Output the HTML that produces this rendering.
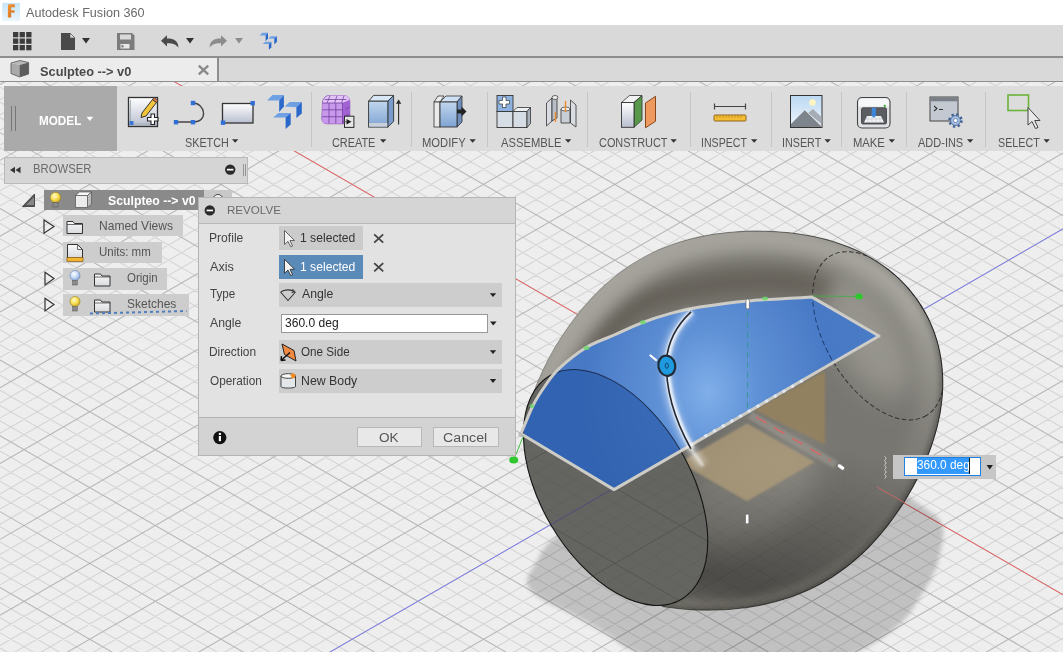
<!DOCTYPE html>
<html><head><meta charset="utf-8">
<style>
*{margin:0;padding:0;box-sizing:border-box}
html,body{width:1063px;height:652px;overflow:hidden;background:#eee;font-family:"Liberation Sans",sans-serif}
.a{position:absolute}
.t{position:absolute;white-space:nowrap;line-height:1;transform-origin:0 0}
#scene{position:absolute;left:0;top:0}
svg.a{overflow:visible}
</style></head><body>
<svg id="scene" width="1063" height="652" viewBox="0 0 1063 652">
<defs>
  <filter id="gblur" x="0" y="0" width="1063" height="652" filterUnits="userSpaceOnUse"><feGaussianBlur stdDeviation="0.6"/></filter>
  <filter id="bl6" x="-50%" y="-50%" width="200%" height="200%"><feGaussianBlur stdDeviation="6"/></filter>
  <filter id="bl8" x="-50%" y="-50%" width="200%" height="200%"><feGaussianBlur stdDeviation="8"/></filter>
  <filter id="bl10" x="-50%" y="-50%" width="200%" height="200%"><feGaussianBlur stdDeviation="10"/></filter>
  <filter id="bl15" x="-50%" y="-50%" width="200%" height="200%"><feGaussianBlur stdDeviation="15"/></filter>
  <filter id="bl2" x="-50%" y="-50%" width="200%" height="200%"><feGaussianBlur stdDeviation="2"/></filter>
  <filter id="bl3" x="-50%" y="-50%" width="200%" height="200%"><feGaussianBlur stdDeviation="3"/></filter>
  <filter id="bl1" x="-50%" y="-50%" width="200%" height="200%"><feGaussianBlur stdDeviation="1.2"/></filter>
  <radialGradient id="rimG">
    <stop offset="0" stop-color="#000" stop-opacity="0"/>
    <stop offset="0.78" stop-color="#000" stop-opacity="0"/>
    <stop offset="0.93" stop-color="#000" stop-opacity="0.14"/>
    <stop offset="1" stop-color="#000" stop-opacity="0.38"/>
  </radialGradient>
  <linearGradient id="bottomDark" gradientUnits="userSpaceOnUse" x1="820" y1="440" x2="770" y2="600">
    <stop offset="0" stop-color="#000" stop-opacity="0"/>
    <stop offset="1" stop-color="#000" stop-opacity="0.38"/>
  </linearGradient>
  <radialGradient id="blueG" gradientUnits="userSpaceOnUse" cx="708" cy="392" r="125" gradientTransform="translate(708 392) scale(1 1.25) translate(-708 -392)">
    <stop offset="0" stop-color="#80b1ee"/>
    <stop offset="0.4" stop-color="#5e92da"/>
    <stop offset="1" stop-color="#4679c8"/>
  </radialGradient>
  <clipPath id="bodyClip"><path d="M353.8 100L1063 100L1063 700L697.2 700Z"/></clipPath>
  <clipPath id="bodyE"><path d="M523.5 433.1L524.6 426.3L525.9 419.5L527.4 412.8L529.2 406.2L531.2 399.7L533.3 393.4L535.6 387.1L538.1 381.0L540.7 375.0L543.4 369.1L546.3 363.3L549.2 357.6L552.3 352.1L555.4 346.6L558.7 341.3L562.0 336.0L565.5 330.9L569.0 325.8L572.6 320.9L576.3 316.1L580.0 311.3L583.9 306.7L587.9 302.2L591.9 297.7L596.1 293.4L600.3 289.2L604.7 285.1L609.2 281.2L613.7 277.4L618.4 273.7L623.2 270.1L628.0 266.7L633.0 263.5L638.1 260.4L643.2 257.4L648.5 254.7L653.8 252.1L659.2 249.6L664.6 247.4L670.2 245.2L675.8 243.3L681.4 241.5L687.1 239.9L692.8 238.4L698.6 237.1L704.4 235.9L710.3 234.8L716.1 233.9L722.1 233.2L728.0 232.5L734.0 232.0L740.0 231.6L746.0 231.3L752.1 231.1L758.2 231.1L764.3 231.2L770.5 231.4L776.7 231.7L782.9 232.2L789.2 232.8L795.5 233.5L801.8 234.5L808.2 235.5L814.6 236.8L821.0 238.3L827.4 239.9L833.8 241.8L840.2 243.9L846.5 246.2L852.8 248.8L859.1 251.6L865.2 254.7L871.2 258.1L877.1 261.7L882.9 265.6L888.5 269.8L893.9 274.2L899.2 278.9L904.1 283.9L908.9 289.1L913.3 294.5L917.5 300.2L921.4 306.1L925.0 312.2L928.3 318.4L931.2 324.9L933.9 331.4L936.1 338.1L938.1 344.9L939.6 351.7L940.9 358.6L941.8 365.6L942.4 372.6L942.7 379.5L942.7 386.5L942.4 393.4L941.8 400.3L940.9 407.1L939.9 413.8L938.5 420.5L937.0 427.1L935.2 433.5L933.3 439.9L931.2 446.2L929.0 452.3L926.6 458.4L924.0 464.4L921.4 470.2L918.6 476.0L915.7 481.6L912.7 487.2L909.6 492.6L906.4 498.0L903.2 503.2L899.8 508.4L896.3 513.5L892.8 518.5L889.1 523.4L885.4 528.2L881.5 533.0L877.5 537.6L873.4 542.1L869.3 546.5L865.0 550.8L860.5 555.0L856.0 559.0L851.4 562.9L846.6 566.7L841.7 570.3L836.8 573.8L831.7 577.2L826.5 580.3L821.2 583.4L815.8 586.2L810.3 588.9L804.7 591.4L799.1 593.8L793.4 595.9L787.6 597.9L781.8 599.8L775.9 601.5L769.9 603.0L763.9 604.4L757.9 605.6L751.8 606.6L745.7 607.6L739.5 608.3L733.3 609.0L727.1 609.5L720.8 609.8L714.5 610.0L708.1 610.1L701.7 610.1L695.3 609.9L688.9 609.5L682.4 609.0L675.8 608.3L669.3 607.5L662.7 606.5Z"/></clipPath>
  <clipPath id="capClip"><ellipse cx="615.6" cy="487.5" rx="129.7" ry="74.75" transform="rotate(59.44 615.6 487.5)"/></clipPath>
  <clipPath id="profClip"><path d="M521.0 433.8C523.0 429.1 529.0 413.5 533.0 405.5C537.0 397.5 540.7 392.1 545.0 386.0C549.3 379.9 552.1 375.1 559.0 368.7C565.9 362.2 577.4 352.9 586.6 347.3C595.8 341.7 605.0 339.1 614.2 335.0C623.4 330.9 632.5 326.4 641.8 322.8C651.1 319.2 660.3 316.2 670.0 313.6C679.7 311.0 687.0 309.1 700.0 307.0C713.0 304.9 729.4 302.5 748.1 300.9C766.8 299.2 801.4 297.7 812.1 297.1L879 336L614 489.6Z"/></clipPath>
  <clipPath id="upperHalf"><path d="M500 200H960V300L840 290L700 300L600 330L520 430H500Z"/></clipPath>
  <clipPath id="lowerHalf"><path d="M600 480L960 420V652H600Z"/></clipPath>
  <linearGradient id="topMG" gradientUnits="userSpaceOnUse" x1="680" y1="260" x2="860" y2="520"><stop offset="0" stop-color="#fff"/><stop offset="0.55" stop-color="#fff"/><stop offset="1" stop-color="#000"/></linearGradient>
  <mask id="topMask" maskUnits="userSpaceOnUse" x="400" y="150" width="660" height="520"><rect x="400" y="150" width="660" height="520" fill="url(#topMG)"/></mask>
  <linearGradient id="botMG" gradientUnits="userSpaceOnUse" x1="800" y1="470" x2="760" y2="610"><stop offset="0" stop-color="#000"/><stop offset="1" stop-color="#fff"/></linearGradient>
  <mask id="botMask" maskUnits="userSpaceOnUse" x="400" y="150" width="660" height="520"><rect x="400" y="150" width="660" height="520" fill="url(#botMG)"/></mask>
  <linearGradient id="botMG2" gradientUnits="userSpaceOnUse" x1="800" y1="430" x2="780" y2="560"><stop offset="0" stop-color="#000"/><stop offset="1" stop-color="#fff"/></linearGradient>
  <mask id="botMask2" maskUnits="userSpaceOnUse" x="400" y="150" width="660" height="520"><rect x="400" y="150" width="660" height="520" fill="url(#botMG2)"/></mask>
  <linearGradient id="rimMG" gradientUnits="userSpaceOnUse" x1="700" y1="260" x2="820" y2="480"><stop offset="0" stop-color="#000"/><stop offset="1" stop-color="#fff"/></linearGradient>
  <mask id="rimMask" maskUnits="userSpaceOnUse" x="400" y="150" width="660" height="520"><rect x="400" y="150" width="660" height="520" fill="url(#rimMG)"/></mask>
  <linearGradient id="edgeMG" gradientUnits="userSpaceOnUse" x1="640" y1="260" x2="900" y2="330"><stop offset="0" stop-color="#333"/><stop offset="1" stop-color="#fff"/></linearGradient>
  <mask id="edgeMask" maskUnits="userSpaceOnUse" x="400" y="150" width="660" height="520"><rect x="400" y="150" width="660" height="520" fill="url(#edgeMG)"/></mask>
  <clipPath id="vp"><rect x="0" y="82" width="1063" height="570"/></clipPath>
</defs>
<g clip-path="url(#vp)">
<rect x="0" y="0" width="1063" height="652" fill="#eeeeee"/>
<g filter="url(#gblur)">
<path d="M0 -534.43L1063 79.34M0 -519.27L1063 94.50M0 -504.11L1063 109.66M0 -488.95L1063 124.82M0 -458.63L1063 155.14M0 -443.47L1063 170.30M0 -428.31L1063 185.46M0 -413.15L1063 200.62M0 -382.83L1063 230.94M0 -367.67L1063 246.10M0 -352.51L1063 261.26M0 -337.35L1063 276.42M0 -307.03L1063 306.74M0 -291.87L1063 321.90M0 -276.71L1063 337.06M0 -261.55L1063 352.22M0 -231.23L1063 382.54M0 -216.07L1063 397.70M0 -200.91L1063 412.86M0 -185.75L1063 428.02M0 -155.43L1063 458.34M0 -140.27L1063 473.50M0 -125.11L1063 488.66M0 -109.95L1063 503.82M0 -79.63L1063 534.14M0 -64.47L1063 549.30M0 -49.31L1063 564.46M0 -34.15L1063 579.62M0 -3.83L1063 609.94M0 11.33L1063 625.10M0 26.49L1063 640.26M0 41.65L1063 655.42M0 71.97L1063 685.74M0 87.13L1063 700.90M0 102.29L1063 716.06M0 117.45L1063 731.22M0 147.77L1063 761.54M0 162.93L1063 776.70M0 178.09L1063 791.86M0 193.25L1063 807.02M0 223.57L1063 837.34M0 238.73L1063 852.50M0 253.89L1063 867.66M0 269.05L1063 882.82M0 299.37L1063 913.14M0 314.53L1063 928.30M0 329.69L1063 943.46M0 344.85L1063 958.62M0 375.17L1063 988.94M0 390.33L1063 1004.10M0 405.49L1063 1019.26M0 420.65L1063 1034.42M0 450.97L1063 1064.74M0 466.13L1063 1079.90M0 481.29L1063 1095.06M0 496.45L1063 1110.22M0 526.77L1063 1140.54M0 541.93L1063 1155.70M0 557.09L1063 1170.86M0 572.25L1063 1186.02M0 602.57L1063 1216.34M0 617.73L1063 1231.50M0 632.89L1063 1246.66M0 648.05L1063 1261.82M0 69.43L1063 -544.34M0 99.75L1063 -514.02M0 114.91L1063 -498.86M0 130.07L1063 -483.70M0 145.23L1063 -468.54M0 175.55L1063 -438.22M0 190.71L1063 -423.06M0 205.87L1063 -407.90M0 221.03L1063 -392.74M0 251.35L1063 -362.42M0 266.51L1063 -347.26M0 281.67L1063 -332.10M0 296.83L1063 -316.94M0 327.15L1063 -286.62M0 342.31L1063 -271.46M0 357.47L1063 -256.30M0 372.63L1063 -241.14M0 402.95L1063 -210.82M0 418.11L1063 -195.66M0 433.27L1063 -180.50M0 448.43L1063 -165.34M0 478.75L1063 -135.02M0 493.91L1063 -119.86M0 509.07L1063 -104.70M0 524.23L1063 -89.54M0 554.55L1063 -59.22M0 569.71L1063 -44.06M0 584.87L1063 -28.90M0 600.03L1063 -13.74M0 630.35L1063 16.58M0 645.51L1063 31.74M0 660.67L1063 46.90M0 675.83L1063 62.06M0 706.15L1063 92.38M0 721.31L1063 107.54M0 736.47L1063 122.70M0 751.63L1063 137.86M0 781.95L1063 168.18M0 797.11L1063 183.34M0 812.27L1063 198.50M0 827.43L1063 213.66M0 857.75L1063 243.98M0 872.91L1063 259.14M0 888.07L1063 274.30M0 903.23L1063 289.46M0 933.55L1063 319.78M0 948.71L1063 334.94M0 963.87L1063 350.10M0 979.03L1063 365.26M0 1009.35L1063 395.58M0 1024.51L1063 410.74M0 1039.67L1063 425.90M0 1054.83L1063 441.06M0 1085.15L1063 471.38M0 1100.31L1063 486.54M0 1115.47L1063 501.70M0 1130.63L1063 516.86M0 1160.95L1063 547.18M0 1176.11L1063 562.34M0 1191.27L1063 577.50M0 1206.43L1063 592.66M0 1236.75L1063 622.98M0 1251.91L1063 638.14M0 1267.07L1063 653.30" stroke="#d5d5d5" stroke-width="1.1" fill="none"/>
<path d="M0 -473.79L1063 139.98M0 -397.99L1063 215.78M0 -322.19L1063 291.58M0 -246.39L1063 367.38M0 -170.59L1063 443.18M0 -94.79L1063 518.98M0 -18.99L1063 594.78M0 56.81L1063 670.58M0 132.61L1063 746.38M0 208.41L1063 822.18M0 284.21L1063 897.98M0 360.01L1063 973.78M0 435.81L1063 1049.58M0 511.61L1063 1125.38M0 587.41L1063 1201.18M0 663.21L1063 1276.98M0 84.59L1063 -529.18M0 160.39L1063 -453.38M0 236.19L1063 -377.58M0 311.99L1063 -301.78M0 387.79L1063 -225.98M0 463.59L1063 -150.18M0 539.39L1063 -74.38M0 615.19L1063 1.42M0 690.99L1063 77.22M0 766.79L1063 153.02M0 842.59L1063 228.82M0 918.39L1063 304.62M0 994.19L1063 380.42M0 1069.99L1063 456.22M0 1145.79L1063 532.02M0 1221.59L1063 607.82" stroke="#b8b8b8" stroke-width="1.1" fill="none"/>
</g>
<path d="M0 -18.99L1063 594.78" stroke="#ee6262" stroke-width="1" fill="none"/>
<path d="M0 842.59L1063 228.82" stroke="#7d7df0" stroke-width="1" fill="none"/>
<!-- shadow -->
<path d="M527.0 583.0C527.7 588.8 532.8 593.0 540.0 598.0C547.2 603.0 559.2 607.2 570.0 613.0C580.8 618.8 594.0 626.5 605.0 633.0C616.0 639.5 620.2 645.5 636.0 652.0C651.8 658.5 676.0 668.2 700.0 672.0C724.0 675.8 753.8 678.3 780.0 675.0C806.2 671.7 837.0 660.5 857.0 652.0C877.0 643.5 889.8 632.7 900.0 624.0C910.2 615.3 913.2 607.4 918.3 600.0C923.4 592.6 927.3 586.2 930.6 579.8C933.9 573.3 936.2 570.0 938.2 561.3C940.2 552.6 945.0 536.5 942.8 527.6C940.6 518.7 937.1 515.9 925.0 508.0C912.9 500.1 900.8 486.3 870.0 480.0C839.2 473.7 781.7 466.7 740.0 470.0C698.3 473.3 650.8 488.8 620.0 500.0C589.2 511.2 569.4 527.0 555.4 537.5C541.4 548.0 540.7 555.4 536.0 563.0C531.3 570.6 526.3 577.2 527.0 583.0Z" fill="#000" fill-opacity="0.19" filter="url(#bl2)"/>
<!-- body -->
<g clip-path="url(#bodyE)">
  <rect x="500" y="220" width="460" height="400" fill="#787670"/>
  <ellipse cx="745" cy="495" rx="80" ry="45" transform="rotate(-30 745 495)" fill="#a3a19a" fill-opacity="0.65" filter="url(#bl15)"/>
  <ellipse cx="868" cy="335" rx="70" ry="34" transform="rotate(59 868 335)" fill="#aeada6" fill-opacity="0.55" filter="url(#bl15)"/>
  <path d="M556 405C570 362 600 330 640 304C680 288 720 282 760 281C790 281 810 284 830 290" fill="none" stroke="#575145" stroke-width="20" stroke-opacity="0.62" filter="url(#bl8)"/>
  <rect x="500" y="220" width="460" height="400" fill="url(#bottomDark)"/>
  <g mask="url(#topMask)">
   <path d="M523.5 433.1L524.6 426.3L525.9 419.5L527.4 412.8L529.2 406.2L531.2 399.7L533.3 393.4L535.6 387.1L538.1 381.0L540.7 375.0L543.4 369.1L546.3 363.3L549.2 357.6L552.3 352.1L555.4 346.6L558.7 341.3L562.0 336.0L565.5 330.9L569.0 325.8L572.6 320.9L576.3 316.1L580.0 311.3L583.9 306.7L587.9 302.2L591.9 297.7L596.1 293.4L600.3 289.2L604.7 285.1L609.2 281.2L613.7 277.4L618.4 273.7L623.2 270.1L628.0 266.7L633.0 263.5L638.1 260.4L643.2 257.4L648.5 254.7L653.8 252.1L659.2 249.6L664.6 247.4L670.2 245.2L675.8 243.3L681.4 241.5L687.1 239.9L692.8 238.4L698.6 237.1L704.4 235.9L710.3 234.8L716.1 233.9L722.1 233.2L728.0 232.5L734.0 232.0L740.0 231.6L746.0 231.3L752.1 231.1L758.2 231.1L764.3 231.2L770.5 231.4L776.7 231.7L782.9 232.2L789.2 232.8L795.5 233.5L801.8 234.5L808.2 235.5L814.6 236.8L821.0 238.3L827.4 239.9L833.8 241.8L840.2 243.9L846.5 246.2L852.8 248.8L859.1 251.6L865.2 254.7L871.2 258.1L877.1 261.7L882.9 265.6L888.5 269.8L893.9 274.2L899.2 278.9L904.1 283.9L908.9 289.1L913.3 294.5L917.5 300.2L921.4 306.1L925.0 312.2L928.3 318.4L931.2 324.9L933.9 331.4L936.1 338.1L938.1 344.9L939.6 351.7L940.9 358.6L941.8 365.6L942.4 372.6L942.7 379.5L942.7 386.5L942.4 393.4L941.8 400.3L940.9 407.1L939.9 413.8L938.5 420.5L937.0 427.1L935.2 433.5L933.3 439.9L931.2 446.2L929.0 452.3L926.6 458.4L924.0 464.4L921.4 470.2L918.6 476.0L915.7 481.6L912.7 487.2L909.6 492.6L906.4 498.0L903.2 503.2L899.8 508.4L896.3 513.5L892.8 518.5L889.1 523.4L885.4 528.2L881.5 533.0L877.5 537.6L873.4 542.1L869.3 546.5L865.0 550.8L860.5 555.0L856.0 559.0L851.4 562.9L846.6 566.7L841.7 570.3L836.8 573.8L831.7 577.2L826.5 580.3L821.2 583.4L815.8 586.2L810.3 588.9L804.7 591.4L799.1 593.8L793.4 595.9L787.6 597.9L781.8 599.8L775.9 601.5L769.9 603.0L763.9 604.4L757.9 605.6L751.8 606.6L745.7 607.6L739.5 608.3L733.3 609.0L727.1 609.5L720.8 609.8L714.5 610.0L708.1 610.1L701.7 610.1L695.3 609.9L688.9 609.5L682.4 609.0L675.8 608.3L669.3 607.5L662.7 606.5Z" fill="none" stroke="#b0afa8" stroke-width="44" stroke-opacity="0.8" filter="url(#bl8)"/>
  </g>
  <g mask="url(#botMask)">
   <path d="M523.5 433.1L524.6 426.3L525.9 419.5L527.4 412.8L529.2 406.2L531.2 399.7L533.3 393.4L535.6 387.1L538.1 381.0L540.7 375.0L543.4 369.1L546.3 363.3L549.2 357.6L552.3 352.1L555.4 346.6L558.7 341.3L562.0 336.0L565.5 330.9L569.0 325.8L572.6 320.9L576.3 316.1L580.0 311.3L583.9 306.7L587.9 302.2L591.9 297.7L596.1 293.4L600.3 289.2L604.7 285.1L609.2 281.2L613.7 277.4L618.4 273.7L623.2 270.1L628.0 266.7L633.0 263.5L638.1 260.4L643.2 257.4L648.5 254.7L653.8 252.1L659.2 249.6L664.6 247.4L670.2 245.2L675.8 243.3L681.4 241.5L687.1 239.9L692.8 238.4L698.6 237.1L704.4 235.9L710.3 234.8L716.1 233.9L722.1 233.2L728.0 232.5L734.0 232.0L740.0 231.6L746.0 231.3L752.1 231.1L758.2 231.1L764.3 231.2L770.5 231.4L776.7 231.7L782.9 232.2L789.2 232.8L795.5 233.5L801.8 234.5L808.2 235.5L814.6 236.8L821.0 238.3L827.4 239.9L833.8 241.8L840.2 243.9L846.5 246.2L852.8 248.8L859.1 251.6L865.2 254.7L871.2 258.1L877.1 261.7L882.9 265.6L888.5 269.8L893.9 274.2L899.2 278.9L904.1 283.9L908.9 289.1L913.3 294.5L917.5 300.2L921.4 306.1L925.0 312.2L928.3 318.4L931.2 324.9L933.9 331.4L936.1 338.1L938.1 344.9L939.6 351.7L940.9 358.6L941.8 365.6L942.4 372.6L942.7 379.5L942.7 386.5L942.4 393.4L941.8 400.3L940.9 407.1L939.9 413.8L938.5 420.5L937.0 427.1L935.2 433.5L933.3 439.9L931.2 446.2L929.0 452.3L926.6 458.4L924.0 464.4L921.4 470.2L918.6 476.0L915.7 481.6L912.7 487.2L909.6 492.6L906.4 498.0L903.2 503.2L899.8 508.4L896.3 513.5L892.8 518.5L889.1 523.4L885.4 528.2L881.5 533.0L877.5 537.6L873.4 542.1L869.3 546.5L865.0 550.8L860.5 555.0L856.0 559.0L851.4 562.9L846.6 566.7L841.7 570.3L836.8 573.8L831.7 577.2L826.5 580.3L821.2 583.4L815.8 586.2L810.3 588.9L804.7 591.4L799.1 593.8L793.4 595.9L787.6 597.9L781.8 599.8L775.9 601.5L769.9 603.0L763.9 604.4L757.9 605.6L751.8 606.6L745.7 607.6L739.5 608.3L733.3 609.0L727.1 609.5L720.8 609.8L714.5 610.0L708.1 610.1L701.7 610.1L695.3 609.9L688.9 609.5L682.4 609.0L675.8 608.3L669.3 607.5L662.7 606.5Z" fill="none" stroke="#9a958a" stroke-width="16" stroke-opacity="0.6" filter="url(#bl6)"/>
  </g>
  <g mask="url(#rimMask)"><path d="M523.5 433.1L524.6 426.3L525.9 419.5L527.4 412.8L529.2 406.2L531.2 399.7L533.3 393.4L535.6 387.1L538.1 381.0L540.7 375.0L543.4 369.1L546.3 363.3L549.2 357.6L552.3 352.1L555.4 346.6L558.7 341.3L562.0 336.0L565.5 330.9L569.0 325.8L572.6 320.9L576.3 316.1L580.0 311.3L583.9 306.7L587.9 302.2L591.9 297.7L596.1 293.4L600.3 289.2L604.7 285.1L609.2 281.2L613.7 277.4L618.4 273.7L623.2 270.1L628.0 266.7L633.0 263.5L638.1 260.4L643.2 257.4L648.5 254.7L653.8 252.1L659.2 249.6L664.6 247.4L670.2 245.2L675.8 243.3L681.4 241.5L687.1 239.9L692.8 238.4L698.6 237.1L704.4 235.9L710.3 234.8L716.1 233.9L722.1 233.2L728.0 232.5L734.0 232.0L740.0 231.6L746.0 231.3L752.1 231.1L758.2 231.1L764.3 231.2L770.5 231.4L776.7 231.7L782.9 232.2L789.2 232.8L795.5 233.5L801.8 234.5L808.2 235.5L814.6 236.8L821.0 238.3L827.4 239.9L833.8 241.8L840.2 243.9L846.5 246.2L852.8 248.8L859.1 251.6L865.2 254.7L871.2 258.1L877.1 261.7L882.9 265.6L888.5 269.8L893.9 274.2L899.2 278.9L904.1 283.9L908.9 289.1L913.3 294.5L917.5 300.2L921.4 306.1L925.0 312.2L928.3 318.4L931.2 324.9L933.9 331.4L936.1 338.1L938.1 344.9L939.6 351.7L940.9 358.6L941.8 365.6L942.4 372.6L942.7 379.5L942.7 386.5L942.4 393.4L941.8 400.3L940.9 407.1L939.9 413.8L938.5 420.5L937.0 427.1L935.2 433.5L933.3 439.9L931.2 446.2L929.0 452.3L926.6 458.4L924.0 464.4L921.4 470.2L918.6 476.0L915.7 481.6L912.7 487.2L909.6 492.6L906.4 498.0L903.2 503.2L899.8 508.4L896.3 513.5L892.8 518.5L889.1 523.4L885.4 528.2L881.5 533.0L877.5 537.6L873.4 542.1L869.3 546.5L865.0 550.8L860.5 555.0L856.0 559.0L851.4 562.9L846.6 566.7L841.7 570.3L836.8 573.8L831.7 577.2L826.5 580.3L821.2 583.4L815.8 586.2L810.3 588.9L804.7 591.4L799.1 593.8L793.4 595.9L787.6 597.9L781.8 599.8L775.9 601.5L769.9 603.0L763.9 604.4L757.9 605.6L751.8 606.6L745.7 607.6L739.5 608.3L733.3 609.0L727.1 609.5L720.8 609.8L714.5 610.0L708.1 610.1L701.7 610.1L695.3 609.9L688.9 609.5L682.4 609.0L675.8 608.3L669.3 607.5L662.7 606.5Z" fill="none" stroke="#2a2926" stroke-width="6" stroke-opacity="0.4" filter="url(#bl2)"/></g>
  <g mask="url(#botMask2)" opacity="0.07">
   <path d="M0 -473.79L1063 139.98M0 -397.99L1063 215.78M0 -322.19L1063 291.58M0 -246.39L1063 367.38M0 -170.59L1063 443.18M0 -94.79L1063 518.98M0 -18.99L1063 594.78M0 56.81L1063 670.58M0 132.61L1063 746.38M0 208.41L1063 822.18M0 284.21L1063 897.98M0 360.01L1063 973.78M0 435.81L1063 1049.58M0 511.61L1063 1125.38M0 587.41L1063 1201.18M0 663.21L1063 1276.98M0 84.59L1063 -529.18M0 160.39L1063 -453.38M0 236.19L1063 -377.58M0 311.99L1063 -301.78M0 387.79L1063 -225.98M0 463.59L1063 -150.18M0 539.39L1063 -74.38M0 615.19L1063 1.42M0 690.99L1063 77.22M0 766.79L1063 153.02M0 842.59L1063 228.82M0 918.39L1063 304.62M0 994.19L1063 380.42M0 1069.99L1063 456.22M0 1145.79L1063 532.02M0 1221.59L1063 607.82" stroke="#000" stroke-width="1" fill="none"/>
   <path d="M0 -534.43L1063 79.34M0 -519.27L1063 94.50M0 -504.11L1063 109.66M0 -488.95L1063 124.82M0 -458.63L1063 155.14M0 -443.47L1063 170.30M0 -428.31L1063 185.46M0 -413.15L1063 200.62M0 -382.83L1063 230.94M0 -367.67L1063 246.10M0 -352.51L1063 261.26M0 -337.35L1063 276.42M0 -307.03L1063 306.74M0 -291.87L1063 321.90M0 -276.71L1063 337.06M0 -261.55L1063 352.22M0 -231.23L1063 382.54M0 -216.07L1063 397.70M0 -200.91L1063 412.86M0 -185.75L1063 428.02M0 -155.43L1063 458.34M0 -140.27L1063 473.50M0 -125.11L1063 488.66M0 -109.95L1063 503.82M0 -79.63L1063 534.14M0 -64.47L1063 549.30M0 -49.31L1063 564.46M0 -34.15L1063 579.62M0 -3.83L1063 609.94M0 11.33L1063 625.10M0 26.49L1063 640.26M0 41.65L1063 655.42M0 71.97L1063 685.74M0 87.13L1063 700.90M0 102.29L1063 716.06M0 117.45L1063 731.22M0 147.77L1063 761.54M0 162.93L1063 776.70M0 178.09L1063 791.86M0 193.25L1063 807.02M0 223.57L1063 837.34M0 238.73L1063 852.50M0 253.89L1063 867.66M0 269.05L1063 882.82M0 299.37L1063 913.14M0 314.53L1063 928.30M0 329.69L1063 943.46M0 344.85L1063 958.62M0 375.17L1063 988.94M0 390.33L1063 1004.10M0 405.49L1063 1019.26M0 420.65L1063 1034.42M0 450.97L1063 1064.74M0 466.13L1063 1079.90M0 481.29L1063 1095.06M0 496.45L1063 1110.22M0 526.77L1063 1140.54M0 541.93L1063 1155.70M0 557.09L1063 1170.86M0 572.25L1063 1186.02M0 602.57L1063 1216.34M0 617.73L1063 1231.50M0 632.89L1063 1246.66M0 648.05L1063 1261.82M0 69.43L1063 -544.34M0 99.75L1063 -514.02M0 114.91L1063 -498.86M0 130.07L1063 -483.70M0 145.23L1063 -468.54M0 175.55L1063 -438.22M0 190.71L1063 -423.06M0 205.87L1063 -407.90M0 221.03L1063 -392.74M0 251.35L1063 -362.42M0 266.51L1063 -347.26M0 281.67L1063 -332.10M0 296.83L1063 -316.94M0 327.15L1063 -286.62M0 342.31L1063 -271.46M0 357.47L1063 -256.30M0 372.63L1063 -241.14M0 402.95L1063 -210.82M0 418.11L1063 -195.66M0 433.27L1063 -180.50M0 448.43L1063 -165.34M0 478.75L1063 -135.02M0 493.91L1063 -119.86M0 509.07L1063 -104.70M0 524.23L1063 -89.54M0 554.55L1063 -59.22M0 569.71L1063 -44.06M0 584.87L1063 -28.90M0 600.03L1063 -13.74M0 630.35L1063 16.58M0 645.51L1063 31.74M0 660.67L1063 46.90M0 675.83L1063 62.06M0 706.15L1063 92.38M0 721.31L1063 107.54M0 736.47L1063 122.70M0 751.63L1063 137.86M0 781.95L1063 168.18M0 797.11L1063 183.34M0 812.27L1063 198.50M0 827.43L1063 213.66M0 857.75L1063 243.98M0 872.91L1063 259.14M0 888.07L1063 274.30M0 903.23L1063 289.46M0 933.55L1063 319.78M0 948.71L1063 334.94M0 963.87L1063 350.10M0 979.03L1063 365.26M0 1009.35L1063 395.58M0 1024.51L1063 410.74M0 1039.67L1063 425.90M0 1054.83L1063 441.06M0 1085.15L1063 471.38M0 1100.31L1063 486.54M0 1115.47L1063 501.70M0 1130.63L1063 516.86M0 1160.95L1063 547.18M0 1176.11L1063 562.34M0 1191.27L1063 577.50M0 1206.43L1063 592.66M0 1236.75L1063 622.98M0 1251.91L1063 638.14M0 1267.07L1063 653.30" stroke="#000" stroke-width="1" fill="none" opacity="0.6"/>
  </g>
</g>
<g mask="url(#edgeMask)"><path d="M523.5 433.1L524.6 426.3L525.9 419.5L527.4 412.8L529.2 406.2L531.2 399.7L533.3 393.4L535.6 387.1L538.1 381.0L540.7 375.0L543.4 369.1L546.3 363.3L549.2 357.6L552.3 352.1L555.4 346.6L558.7 341.3L562.0 336.0L565.5 330.9L569.0 325.8L572.6 320.9L576.3 316.1L580.0 311.3L583.9 306.7L587.9 302.2L591.9 297.7L596.1 293.4L600.3 289.2L604.7 285.1L609.2 281.2L613.7 277.4L618.4 273.7L623.2 270.1L628.0 266.7L633.0 263.5L638.1 260.4L643.2 257.4L648.5 254.7L653.8 252.1L659.2 249.6L664.6 247.4L670.2 245.2L675.8 243.3L681.4 241.5L687.1 239.9L692.8 238.4L698.6 237.1L704.4 235.9L710.3 234.8L716.1 233.9L722.1 233.2L728.0 232.5L734.0 232.0L740.0 231.6L746.0 231.3L752.1 231.1L758.2 231.1L764.3 231.2L770.5 231.4L776.7 231.7L782.9 232.2L789.2 232.8L795.5 233.5L801.8 234.5L808.2 235.5L814.6 236.8L821.0 238.3L827.4 239.9L833.8 241.8L840.2 243.9L846.5 246.2L852.8 248.8L859.1 251.6L865.2 254.7L871.2 258.1L877.1 261.7L882.9 265.6L888.5 269.8L893.9 274.2L899.2 278.9L904.1 283.9L908.9 289.1L913.3 294.5L917.5 300.2L921.4 306.1L925.0 312.2L928.3 318.4L931.2 324.9L933.9 331.4L936.1 338.1L938.1 344.9L939.6 351.7L940.9 358.6L941.8 365.6L942.4 372.6L942.7 379.5L942.7 386.5L942.4 393.4L941.8 400.3L940.9 407.1L939.9 413.8L938.5 420.5L937.0 427.1L935.2 433.5L933.3 439.9L931.2 446.2L929.0 452.3L926.6 458.4L924.0 464.4L921.4 470.2L918.6 476.0L915.7 481.6L912.7 487.2L909.6 492.6L906.4 498.0L903.2 503.2L899.8 508.4L896.3 513.5L892.8 518.5L889.1 523.4L885.4 528.2L881.5 533.0L877.5 537.6L873.4 542.1L869.3 546.5L865.0 550.8L860.5 555.0L856.0 559.0L851.4 562.9L846.6 566.7L841.7 570.3L836.8 573.8L831.7 577.2L826.5 580.3L821.2 583.4L815.8 586.2L810.3 588.9L804.7 591.4L799.1 593.8L793.4 595.9L787.6 597.9L781.8 599.8L775.9 601.5L769.9 603.0L763.9 604.4L757.9 605.6L751.8 606.6L745.7 607.6L739.5 608.3L733.3 609.0L727.1 609.5L720.8 609.8L714.5 610.0L708.1 610.1L701.7 610.1L695.3 609.9L688.9 609.5L682.4 609.0L675.8 608.3L669.3 607.5L662.7 606.5Z" fill="none" stroke="#2a2927" stroke-width="1.1"/></g>
<!-- interior tan shapes -->
<path d="M679.3 462.6L747 423.4L814.7 462L747 501.3Z" fill="#b09c78" fill-opacity="0.75" filter="url(#bl1)"/>
<path d="M754 410L825 371L825 444.6Z" fill="#9c8558" fill-opacity="0.7" filter="url(#bl1)"/>
<path d="M750 415L836 465" stroke="#9c9a92" stroke-width="8" stroke-opacity="0.55" filter="url(#bl1)"/>
<path d="M756 417L831 461" stroke="#dc6464" stroke-width="1.4" stroke-dasharray="12 9"/>
<!-- right dashed ellipse -->
<g clip-path="url(#bodyE)">
<ellipse cx="878.3" cy="335.8" rx="93.1" ry="52.1" transform="rotate(58.92 878.3 335.8)" fill="none" stroke="#2e2d2b" stroke-width="1" stroke-dasharray="4.5 2.5" stroke-opacity="0.95"/>
</g>
<!-- cap face -->
<ellipse cx="615.6" cy="487.5" rx="129.7" ry="74.75" transform="rotate(59.44 615.6 487.5)" fill="#646461"/>
<g clip-path="url(#capClip)" opacity="0.35">
<path d="M0 -473.79L1063 139.98M0 -397.99L1063 215.78M0 -322.19L1063 291.58M0 -246.39L1063 367.38M0 -170.59L1063 443.18M0 -94.79L1063 518.98M0 -18.99L1063 594.78M0 56.81L1063 670.58M0 132.61L1063 746.38M0 208.41L1063 822.18M0 284.21L1063 897.98M0 360.01L1063 973.78M0 435.81L1063 1049.58M0 511.61L1063 1125.38M0 587.41L1063 1201.18M0 663.21L1063 1276.98M0 84.59L1063 -529.18M0 160.39L1063 -453.38M0 236.19L1063 -377.58M0 311.99L1063 -301.78M0 387.79L1063 -225.98M0 463.59L1063 -150.18M0 539.39L1063 -74.38M0 615.19L1063 1.42M0 690.99L1063 77.22M0 766.79L1063 153.02M0 842.59L1063 228.82M0 918.39L1063 304.62M0 994.19L1063 380.42M0 1069.99L1063 456.22M0 1145.79L1063 532.02M0 1221.59L1063 607.82" stroke="#3a3a38" stroke-width="1" fill="none"/>
<path d="M0 -534.43L1063 79.34M0 -519.27L1063 94.50M0 -504.11L1063 109.66M0 -488.95L1063 124.82M0 -458.63L1063 155.14M0 -443.47L1063 170.30M0 -428.31L1063 185.46M0 -413.15L1063 200.62M0 -382.83L1063 230.94M0 -367.67L1063 246.10M0 -352.51L1063 261.26M0 -337.35L1063 276.42M0 -307.03L1063 306.74M0 -291.87L1063 321.90M0 -276.71L1063 337.06M0 -261.55L1063 352.22M0 -231.23L1063 382.54M0 -216.07L1063 397.70M0 -200.91L1063 412.86M0 -185.75L1063 428.02M0 -155.43L1063 458.34M0 -140.27L1063 473.50M0 -125.11L1063 488.66M0 -109.95L1063 503.82M0 -79.63L1063 534.14M0 -64.47L1063 549.30M0 -49.31L1063 564.46M0 -34.15L1063 579.62M0 -3.83L1063 609.94M0 11.33L1063 625.10M0 26.49L1063 640.26M0 41.65L1063 655.42M0 71.97L1063 685.74M0 87.13L1063 700.90M0 102.29L1063 716.06M0 117.45L1063 731.22M0 147.77L1063 761.54M0 162.93L1063 776.70M0 178.09L1063 791.86M0 193.25L1063 807.02M0 223.57L1063 837.34M0 238.73L1063 852.50M0 253.89L1063 867.66M0 269.05L1063 882.82M0 299.37L1063 913.14M0 314.53L1063 928.30M0 329.69L1063 943.46M0 344.85L1063 958.62M0 375.17L1063 988.94M0 390.33L1063 1004.10M0 405.49L1063 1019.26M0 420.65L1063 1034.42M0 450.97L1063 1064.74M0 466.13L1063 1079.90M0 481.29L1063 1095.06M0 496.45L1063 1110.22M0 526.77L1063 1140.54M0 541.93L1063 1155.70M0 557.09L1063 1170.86M0 572.25L1063 1186.02M0 602.57L1063 1216.34M0 617.73L1063 1231.50M0 632.89L1063 1246.66M0 648.05L1063 1261.82M0 69.43L1063 -544.34M0 99.75L1063 -514.02M0 114.91L1063 -498.86M0 130.07L1063 -483.70M0 145.23L1063 -468.54M0 175.55L1063 -438.22M0 190.71L1063 -423.06M0 205.87L1063 -407.90M0 221.03L1063 -392.74M0 251.35L1063 -362.42M0 266.51L1063 -347.26M0 281.67L1063 -332.10M0 296.83L1063 -316.94M0 327.15L1063 -286.62M0 342.31L1063 -271.46M0 357.47L1063 -256.30M0 372.63L1063 -241.14M0 402.95L1063 -210.82M0 418.11L1063 -195.66M0 433.27L1063 -180.50M0 448.43L1063 -165.34M0 478.75L1063 -135.02M0 493.91L1063 -119.86M0 509.07L1063 -104.70M0 524.23L1063 -89.54M0 554.55L1063 -59.22M0 569.71L1063 -44.06M0 584.87L1063 -28.90M0 600.03L1063 -13.74M0 630.35L1063 16.58M0 645.51L1063 31.74M0 660.67L1063 46.90M0 675.83L1063 62.06M0 706.15L1063 92.38M0 721.31L1063 107.54M0 736.47L1063 122.70M0 751.63L1063 137.86M0 781.95L1063 168.18M0 797.11L1063 183.34M0 812.27L1063 198.50M0 827.43L1063 213.66M0 857.75L1063 243.98M0 872.91L1063 259.14M0 888.07L1063 274.30M0 903.23L1063 289.46M0 933.55L1063 319.78M0 948.71L1063 334.94M0 963.87L1063 350.10M0 979.03L1063 365.26M0 1009.35L1063 395.58M0 1024.51L1063 410.74M0 1039.67L1063 425.90M0 1054.83L1063 441.06M0 1085.15L1063 471.38M0 1100.31L1063 486.54M0 1115.47L1063 501.70M0 1130.63L1063 516.86M0 1160.95L1063 547.18M0 1176.11L1063 562.34M0 1191.27L1063 577.50M0 1206.43L1063 592.66M0 1236.75L1063 622.98M0 1251.91L1063 638.14M0 1267.07L1063 653.30" stroke="#4a4a48" stroke-width="1" fill="none" opacity="0.3"/>
<path d="M0 842.59L1063 228.82" stroke="#3030c0" stroke-width="1" fill="none"/>
</g>
<ellipse cx="615.6" cy="487.5" rx="129.7" ry="74.75" transform="rotate(59.44 615.6 487.5)" fill="none" stroke="#151514" stroke-width="1.1"/>
<!-- blue profile -->
<path d="M521.0 433.8C523.0 429.1 529.0 413.5 533.0 405.5C537.0 397.5 540.7 392.1 545.0 386.0C549.3 379.9 552.1 375.1 559.0 368.7C565.9 362.2 577.4 352.9 586.6 347.3C595.8 341.7 605.0 339.1 614.2 335.0C623.4 330.9 632.5 326.4 641.8 322.8C651.1 319.2 660.3 316.2 670.0 313.6C679.7 311.0 687.0 309.1 700.0 307.0C713.0 304.9 729.4 302.5 748.1 300.9C766.8 299.2 801.4 297.7 812.1 297.1L879 336L614 489.6Z" fill="url(#blueG)" fill-opacity="0.96"/>
<g clip-path="url(#profClip)">
 <g clip-path="url(#capClip)">
  <rect x="500" y="280" width="400" height="220" fill="#2b5cab" fill-opacity="0.72"/>
 </g>
 <ellipse cx="615.6" cy="487.5" rx="129.7" ry="74.75" transform="rotate(59.44 615.6 487.5)" fill="none" stroke="#1d2f50" stroke-width="1"/>
 <ellipse cx="878.3" cy="335.8" rx="93.1" ry="52.1" transform="rotate(58.92 878.3 335.8)" fill="none" stroke="#1f3f70" stroke-width="1" stroke-dasharray="5 3"/>
</g>
<path d="M521.0 433.8C523.0 429.1 529.0 413.5 533.0 405.5C537.0 397.5 540.7 392.1 545.0 386.0C549.3 379.9 552.1 375.1 559.0 368.7C565.9 362.2 577.4 352.9 586.6 347.3C595.8 341.7 605.0 339.1 614.2 335.0C623.4 330.9 632.5 326.4 641.8 322.8C651.1 319.2 660.3 316.2 670.0 313.6C679.7 311.0 687.0 309.1 700.0 307.0C713.0 304.9 729.4 302.5 748.1 300.9C766.8 299.2 801.4 297.7 812.1 297.1L879 336L614 489.6Z" fill="none" stroke="#cdccc6" stroke-width="3" stroke-linejoin="round"/>
<!-- ticks along axis edge -->
<path d="M704.5 436.5L808 377.5" stroke="#e4ecf8" stroke-width="3" stroke-dasharray="3 7" opacity="0.9"/>
<!-- arc manipulator -->
<path d="M691 311.8C677 325 668 342 666.5 360C665.5 385 672 415 691 449C695 456 699 461 703 465" fill="none" stroke="#ffffff" stroke-width="9" stroke-opacity="0.45" filter="url(#bl3)"/>
<path d="M692 311.8C678 325 669 342 667.5 360C666.5 385 673 415 692 449" fill="none" stroke="#fff" stroke-width="5.5" stroke-opacity="0.75" filter="url(#bl1)"/>
<path d="M691 311.8C677 325 668 342 666.5 360C665.5 385 672 415 691 449" fill="none" stroke="#252a33" stroke-width="1.6"/>
<path d="M691 449L703 466" stroke="#fff" stroke-width="3" stroke-opacity="0.5" filter="url(#bl1)"/>
<ellipse cx="666.8" cy="365.7" rx="8.4" ry="10.2" transform="rotate(-12 666.8 365.7)" fill="#1e9ae0" stroke="#222c38" stroke-width="2.2"/>
<ellipse cx="666.8" cy="365.7" rx="1.6" ry="2.6" fill="none" stroke="#123a5a" stroke-width="0.9"/>
<path d="M650.5 355.5L656 360" stroke="#fff" stroke-width="2.2" stroke-linecap="round"/>
<!-- vertical green dashed -->
<path d="M747.5 312V412" stroke="#2f9a8a" stroke-width="1" stroke-dasharray="6 4" opacity="0.8"/>
<path d="M813 296L859 296.5" stroke="#40b040" stroke-width="1" opacity="0.8"/>
<!-- red axis through body right -->
<path d="M877 487L905 503" stroke="#e06a6a" stroke-width="1" opacity="0.8"/>
<!-- handles -->
<rect x="746" y="299" width="3.4" height="10" rx="1.7" fill="#fff" stroke="#666" stroke-width="0.7"/>
<rect x="745.5" y="514" width="3.4" height="10" rx="1.7" fill="#fff" stroke="#666" stroke-width="0.7"/>
<rect x="837" y="465" width="8" height="4" rx="1.8" transform="rotate(35 841 467)" fill="#fff" stroke="#666" stroke-width="0.7"/>
<!-- green dots -->
<ellipse cx="859" cy="296.5" rx="3.8" ry="3" fill="#2ec82e"/>
<ellipse cx="513.7" cy="460" rx="4.5" ry="3.5" fill="#2ec82e"/>
<ellipse cx="765" cy="298.5" rx="3" ry="2" fill="#6ad86a" opacity="0.8"/>
<ellipse cx="643" cy="322.2" rx="3" ry="2" fill="#6ad86a" opacity="0.8"/>
<ellipse cx="586.5" cy="348" rx="3" ry="2" fill="#6ad86a" opacity="0.8"/>
<ellipse cx="532" cy="406" rx="2.5" ry="2" fill="#6ad86a" opacity="0.8"/>
<path d="M513.7 460L523.5 435.6" stroke="#40c040" stroke-width="1"/>
<path d="M518.6 432L523.5 433.5L523.5 437.5L518.6 436.5Z" fill="#bdbdbd"/>
</g>
</svg>

<!-- title bar -->
<div class="a" style="left:0;top:0;width:1063px;height:25px;background:#fff"></div>
<svg class="a" style="left:2px;top:3px" width="18" height="18" viewBox="2 3 18 18"><defs><linearGradient id="fbg" x1="0" y1="0" x2="0" y2="1"><stop offset="0" stop-color="#c6e4f7"/><stop offset="1" stop-color="#eaf5fc"/></linearGradient><linearGradient id="fF" x1="0" y1="0" x2="1" y2="1"><stop offset="0" stop-color="#f29a3a"/><stop offset="1" stop-color="#d0681a"/></linearGradient></defs><rect x="2.3" y="2.9" width="17.7" height="18" fill="url(#fbg)"/><path d="M8 4.4C10 4.1 13 4 14.9 4.6L14.6 7.6C13 7.3 12 7.3 11.2 7.5V10.2L14.8 10.5L14.3 12.8L11.2 12.6V17.2C10.3 17.7 8.6 17.7 7.8 17.2Z" fill="url(#fF)"/></svg>
<!-- toolbar -->
<div class="a" style="left:0;top:25px;width:1063px;height:31px;background:#d9d9d9"></div>
<div class="a" style="left:0;top:56px;width:1063px;height:2px;background:#8e8e8e"></div>
<div class="a" style="left:0;top:58px;width:1063px;height:23px;background:#d9d9d9"></div>
<div class="a" style="left:0;top:58px;width:217px;height:23px;background:#ececec"></div>
<div class="a" style="left:217px;top:58px;width:2px;height:23px;background:#8e8e8e"></div>
<div class="a" style="left:0;top:81px;width:1063px;height:1px;background:#8e8e8e"></div>
<svg class="a" style="left:0;top:25px" width="300" height="31" viewBox="0 25 300 31">
 <g fill="#3c3c3c">
  <rect x="13" y="32" width="5.3" height="5.3"/><rect x="19.6" y="32" width="5.3" height="5.3"/><rect x="26.2" y="32" width="5.3" height="5.3"/>
  <rect x="13" y="38.5" width="5.3" height="5.3"/><rect x="19.6" y="38.5" width="5.3" height="5.3"/><rect x="26.2" y="38.5" width="5.3" height="5.3"/>
  <rect x="13" y="45" width="5.3" height="5.3"/><rect x="19.6" y="45" width="5.3" height="5.3"/><rect x="26.2" y="45" width="5.3" height="5.3"/>
 </g>
 <path d="M61 33H70L75 38V50H61Z" fill="#4a4a4a"/><path d="M70 33L75 38H70Z" fill="#d9d9d9" stroke="#4a4a4a" stroke-width="0.6"/>
 <path d="M82 38H90L86 43.5Z" fill="#333"/>
 <path d="M117 33H132L134.5 35.5V50H117Z" fill="#7c7c7c"/><rect x="120" y="34.5" width="11" height="5" fill="#d9d9d9"/><rect x="120.5" y="44" width="9" height="4.5" fill="#e8e8e8"/><rect x="121.5" y="45" width="2" height="2.5" fill="#7c7c7c"/>
 <path d="M161 40.8L167 35.2V38.6C173 38.4 178.4 40.5 178.4 47.8C176 44.3 172.5 43.2 167 43.3V46.6Z" fill="#4a4a4a"/>
 <path d="M186 38H194L190 43.5Z" fill="#333"/>
 <path d="M227 40.8L221 35.2V38.6C215 38.4 209.6 40.5 209.6 47.8C212 44.3 215.5 43.2 221 43.3V46.6Z" fill="#8c8c8c"/>
 <path d="M235 38H243L239 43.5Z" fill="#8c8c8c"/>
 <g transform="translate(126.05 -14.75) scale(0.5)"><path d="M267.1 100.5L272.5 95.1H283.9L279.2 100.5Z" fill="#6fa0e4"/><path d="M279.2 100.5L283.9 95.1V106.5L279.2 111.9Z" fill="#2a68cc"/><path d="M284.6 106.5L289.6 102.1H301.8L296.4 107.2Z" fill="#6fa0e4"/><path d="M296.4 107.2L301.8 102.1V113.6L296.4 118Z" fill="#2a68cc"/><path d="M273.1 117.6L278.5 112.9H290.7L285.6 117.6Z" fill="#6fa0e4"/><path d="M285.6 117.6L290.7 112.9V124.4L285.6 129.1Z" fill="#2a68cc"/></g>
</svg>
<!-- tab -->
<svg class="a" style="left:10px;top:59px" width="20" height="20" viewBox="10 59 20 20">
 <path d="M11 63L20 60.5L28.6 62.5L19.5 65Z" fill="#b8b8b8"/>
 <path d="M11 63L19.5 65V77L11 73.5Z" fill="#a9a9a9"/>
 <path d="M19.5 65L28.6 62.5V74L19.5 77Z" fill="#5e5e5e"/>
 <path d="M11 63L20 60.5L28.6 62.5V74L19.5 77L11 73.5Z" fill="none" stroke="#555" stroke-width="0.8"/>
</svg>
<svg class="a" style="left:196px;top:63px" width="15" height="14" viewBox="196 63 15 14"><path d="M198.8 65.6L208.2 74.4M208.2 65.6L198.8 74.4" stroke="#8a8a8a" stroke-width="2.4"/></svg>
<!-- ribbon -->
<div class="a" style="left:4px;top:86px;width:1059px;height:65px;background:#dcdcdc"></div>
<div class="a" style="left:4px;top:86px;width:113px;height:65px;background:#aaaaaa"></div>
<div class="a" style="left:11px;top:106px;width:1px;height:25px;background:#777"></div>
<div class="a" style="left:15px;top:106px;width:1px;height:25px;background:#777"></div>
<svg class="a" style="left:0;top:84px" width="1063" height="70" viewBox="0 84 1063 70">
<defs>
 <linearGradient id="rgW" x1="0" y1="0" x2="0" y2="1"><stop offset="0" stop-color="#ffffff"/><stop offset="1" stop-color="#b9bfd0"/></linearGradient>
 <linearGradient id="rgB" x1="0" y1="0" x2="0" y2="1"><stop offset="0" stop-color="#c0d6ee"/><stop offset="1" stop-color="#7ea3d2"/></linearGradient>
 <linearGradient id="rgP" x1="0" y1="0" x2="1" y2="1"><stop offset="0" stop-color="#e3b7f3"/><stop offset="1" stop-color="#9a4fc2"/></linearGradient>
 <linearGradient id="rgS" x1="0" y1="0" x2="0" y2="1"><stop offset="0" stop-color="#bcd8f2"/><stop offset="1" stop-color="#eef6fc"/></linearGradient>
</defs>
<path d="M86.5 116.8H93.2L89.85 121Z" fill="#fff"/>
<!-- separators -->
<g fill="#c6c6c6">
 <rect x="311" y="92" width="1" height="55"/><rect x="411" y="92" width="1" height="55"/><rect x="487" y="92" width="1" height="55"/>
 <rect x="587" y="92" width="1" height="55"/><rect x="690" y="92" width="1" height="55"/><rect x="771" y="92" width="1" height="55"/>
 <rect x="841" y="92" width="1" height="55"/><rect x="906" y="92" width="1" height="55"/><rect x="985" y="92" width="1" height="55"/>
</g>
<!-- dropdown arrows -->
<g fill="#333">
 <path d="M232 139.2h6.3l-3.15 3.6z"/><path d="M380 139.2h6.3l-3.15 3.6z"/><path d="M469.5 139.2h6.3l-3.15 3.6z"/>
 <path d="M565 139.2h6.3l-3.15 3.6z"/><path d="M670.5 139.2h6.3l-3.15 3.6z"/><path d="M751 139.2h6.3l-3.15 3.6z"/>
 <path d="M824.5 139.2h6.3l-3.15 3.6z"/><path d="M888.7 139.2h6.3l-3.15 3.6z"/><path d="M967 139.2h6.3l-3.15 3.6z"/>
 <path d="M1043.5 139.2h6.3l-3.15 3.6z"/>
</g>
<!-- sketch create -->
<rect x="128.5" y="97.5" width="29" height="29" fill="url(#rgW)" stroke="#333" stroke-width="1.3"/>
<path d="M130.5 100v24h25" fill="none" stroke="#9aa" stroke-width="0.8"/>
<rect x="129.5" y="121" width="4" height="4" fill="#3a78d8"/>
<path d="M142 113L152.5 99.5L156.5 102.5L146 116L141 117.5Z" fill="#f2c53a" stroke="#333" stroke-width="1"/>
<path d="M152.5 99.5L154 97.5L158 100.5L156.5 102.5Z" fill="#e07a50" stroke="#333" stroke-width="0.8"/>
<path d="M147.5 117.5h3.5v-3.5h3.5v3.5h3.5v3.5h-3.5v3.5h-3.5v-3.5h-3.5z" fill="#fff" stroke="#222" stroke-width="1.1"/>
<!-- line+arc -->
<path d="M176 122H193M193 103C205 103 209 122 193 122" fill="none" stroke="#444" stroke-width="1.3"/>
<g fill="#2f6fd6"><rect x="173.8" y="120" width="4.4" height="4.4"/><rect x="190.8" y="120" width="4.4" height="4.4"/><rect x="190.8" y="100.8" width="4.4" height="4.4"/></g>
<!-- rectangle -->
<rect x="222.5" y="103.5" width="30.5" height="19.5" fill="url(#rgW)" stroke="#333" stroke-width="1.3"/>
<g fill="#2f6fd6"><rect x="220.8" y="120.5" width="4.4" height="4.4"/><rect x="250.5" y="101" width="4.4" height="4.4"/></g>
<!-- blue Z icon -->
<g id="zic"><path d="M267.1 100.5L272.5 95.1H283.9L279.2 100.5Z" fill="#6fa0e4"/><path d="M279.2 100.5L283.9 95.1V106.5L279.2 111.9Z" fill="#2a68cc"/><path d="M284.6 106.5L289.6 102.1H301.8L296.4 107.2Z" fill="#6fa0e4"/><path d="M296.4 107.2L301.8 102.1V113.6L296.4 118Z" fill="#2a68cc"/><path d="M273.1 117.6L278.5 112.9H290.7L285.6 117.6Z" fill="#6fa0e4"/><path d="M285.6 117.6L290.7 112.9V124.4L285.6 129.1Z" fill="#2a68cc"/></g>
<!-- purple form -->
<path d="M322.5 103.5C322 100 325 95.5 329 95.5H343.5C347 95.5 349.8 98 349.8 101.5V118C349.8 121 347.5 123.8 344 123.8H327C324 123.8 321.8 121.5 321.8 118.5Z" fill="#b57ee0" stroke="#8a52b8" stroke-width="0.8"/>
<path d="M322.5 103C323.5 98.5 326.5 95.6 330 95.6H344C347 95.6 349 97.5 349.6 100L342.5 103Z" fill="#e2c4f6"/>
<path d="M342.5 103L349.6 100V118C349.6 121 347.5 123.6 344.5 123.6H342.5Z" fill="#a262d4"/>
<rect x="322.3" y="103" width="20.2" height="20.6" rx="2" fill="#c898ea"/>
<path d="M329 103V123.5M335.8 103V123.5M322.3 109.8H342.5M322.3 116.7H342.5M342.5 103V123.5M322.3 103H342.5M330 95.8L327 103M337 95.8L334.5 103M344 95.8L341.5 103M324.5 99.5H346.5M345.5 109L349.5 107M345.5 116L349.5 114" stroke="#6e3c9c" stroke-width="0.75" fill="none"/>
<rect x="344.5" y="116.2" width="9.4" height="11.2" fill="#e6e6e6" stroke="#2a2a2a" stroke-width="1"/>
<path d="M346.5 119L351.5 121.8L346.5 124.6Z" fill="#1e1e1e"/><path d="M343 121.8H347" stroke="#555" stroke-width="1"/>
<!-- extrude -->
<path d="M368.6 101.2L373.5 95.4H393.6L387.8 101.2Z" fill="#d8e6f6" stroke="#333" stroke-width="0.9"/>
<path d="M387.8 101.2L393.6 95.4V121.5L387.8 127.1Z" fill="#7a9ccc" stroke="#333" stroke-width="0.9"/>
<rect x="368.6" y="101.2" width="19.2" height="25.9" fill="url(#rgB)" stroke="#333" stroke-width="0.9"/>
<rect x="369.1" y="123" width="18.2" height="3.7" fill="#c9d0da"/>
<path d="M398.6 124.4V100.5" stroke="#2a2a2a" stroke-width="1.1"/><path d="M395.9 103.8L398.6 99.5L401.3 103.8Z" fill="#2a2a2a"/>
<!-- modify press pull -->
<path d="M434 102L438 96H444L440 102Z" fill="#eee" stroke="#333" stroke-width="0.8"/>
<rect x="434" y="102" width="6" height="25" fill="#e9e9e9" stroke="#333" stroke-width="0.8"/>
<path d="M440 102L446 96H462L457 102Z" fill="#cfe0f3" stroke="#333" stroke-width="0.8"/>
<path d="M457 102L462 96V122L457 127Z" fill="#6e8fbd" stroke="#333" stroke-width="0.8"/>
<rect x="440" y="102" width="17" height="25" fill="url(#rgB)" stroke="#333" stroke-width="0.9"/>
<path d="M457 109.5H461.5V106.5L466.5 111.5L461.5 116.5V113.5H457Z" fill="#222"/>
<!-- assemble -->
<rect x="497" y="95.5" width="16" height="16" fill="#8fb3e0" stroke="#333" stroke-width="0.9"/>
<path d="M499 100.5h3.5v-3.5h3.5v3.5h3.5v3.5h-3.5v3.5h-3.5v-3.5h-3.5z" fill="#fff" stroke="#333" stroke-width="0.7"/>
<rect x="497" y="111.5" width="16" height="16" fill="#d7dde5" stroke="#333" stroke-width="0.9"/>
<rect x="513" y="111.5" width="14" height="16" fill="#d7dde5" stroke="#333" stroke-width="0.9"/>
<path d="M513 111.5L517 107.5H530.5L527 111.5Z" fill="#eef1f4" stroke="#333" stroke-width="0.8"/>
<path d="M527 111.5L530.5 107.5V123.5L527 127.5Z" fill="#aab3bf" stroke="#333" stroke-width="0.8"/>
<!-- joint -->
<path d="M546.5 103L552 98V121L546.5 126Z" fill="#d9dde2" stroke="#333" stroke-width="0.8"/>
<path d="M552 98L557 96V118L552 121Z" fill="#b8bec6" stroke="#333" stroke-width="0.8"/>
<ellipse cx="555" cy="97.5" rx="3" ry="2" fill="#eee" stroke="#333" stroke-width="0.7"/>
<path d="M555.5 112V122" stroke="#f08a2a" stroke-width="1.4"/>
<path d="M576 105L570.5 100V123L576 127Z" fill="#d9dde2" stroke="#333" stroke-width="0.8"/>
<path d="M561 109h9v14h-9z" fill="#c8ced6" stroke="#333" stroke-width="0.8"/>
<ellipse cx="565.5" cy="109" rx="4.5" ry="2" fill="#eee" stroke="#333" stroke-width="0.7"/>
<path d="M565.5 101V112" stroke="#f08a2a" stroke-width="1.4"/>
<!-- construct -->
<path d="M621.5 102.5L629.5 95.5H642L634 102.5Z" fill="#f2f2f2" stroke="#333" stroke-width="0.8"/>
<path d="M634 102.5L642 95.5V120L634 127.3Z" fill="#58984a" stroke="#333" stroke-width="0.8"/>
<rect x="621.5" y="102.5" width="12.5" height="24.8" fill="url(#rgW)" stroke="#333" stroke-width="0.9"/>
<path d="M645.5 103L655.5 96.3V121.3L645.5 127.8Z" fill="#ee9a5e" stroke="#7a3a10" stroke-width="0.9"/>
<!-- inspect -->
<path d="M714 106.5H746M714.5 103.5V109.5M745.5 103.5V109.5" stroke="#444" stroke-width="1.2"/>
<rect x="714" y="115" width="32" height="6" rx="1" fill="#f2be36" stroke="#8a5a10" stroke-width="0.9"/>
<path d="M717 115.5V118M720 115.5V118M723 115.5V118M726 115.5V118M729 115.5V118M732 115.5V118M735 115.5V118M738 115.5V118M741 115.5V118" stroke="#b07a20" stroke-width="0.6"/>
<!-- insert -->
<rect x="790.5" y="95.5" width="31.5" height="32" fill="url(#rgS)" stroke="#333" stroke-width="1"/>
<circle cx="812.5" cy="102.5" r="3.2" fill="#fff6c0"/>
<path d="M791 124L805 110L821.5 126V127H791Z" fill="#7e848c"/>
<path d="M808 113L813 109L821.5 117V124Z" fill="#a6acb3"/>
<path d="M805 110L821.5 126" stroke="#eee" stroke-width="0.8"/>
<!-- make -->
<rect x="857.5" y="97.5" width="32.5" height="30.5" rx="4.5" fill="#dfe1e4" stroke="#444" stroke-width="1.1"/>
<path d="M858.5 104C858.5 100 860 98.5 863 98.5H884.5C887.5 98.5 889 100 889 104V106.5H858.5Z" fill="#f6f7f8"/>
<rect x="861.5" y="107.8" width="25" height="16.2" rx="1.5" fill="#5a5d62" stroke="#3a3a3a" stroke-width="0.8"/>
<path d="M864 122.5L867 116H881L884 122.5Z" fill="#eef0f2"/>
<path d="M866 119H882M868 117.5V122M872 117V122.5M876 117V122.5M880 117.5V122" stroke="#c0c4c8" stroke-width="0.5"/>
<rect x="871.7" y="107.8" width="4.2" height="7" fill="#3d86dc"/><path d="M870.5 114.5H877L873.8 118Z" fill="#3d86dc"/>
<circle cx="884.8" cy="105.8" r="1.1" fill="#22aa22"/>
<!-- add-ins -->
<rect x="930" y="97" width="28" height="24" fill="#c4c9d1" stroke="#444" stroke-width="1"/>
<rect x="930.5" y="97.5" width="27" height="3.8" fill="#7a7f87"/>
<path d="M934 106L937 108.5L934 111M939 109.5H943" fill="none" stroke="#333" stroke-width="1.1"/>
<circle cx="955.5" cy="120.5" r="6" fill="none" stroke="#41659c" stroke-width="2.6" stroke-dasharray="2.3 2.41"/>
<circle cx="955.5" cy="120.5" r="4.9" fill="#a5bde0" stroke="#3a5a8a" stroke-width="0.8"/>
<circle cx="955.5" cy="120.5" r="2" fill="#fff" stroke="#3a5a8a" stroke-width="0.6"/>
<!-- select -->
<rect x="1008" y="95" width="20.5" height="15.5" fill="none" stroke="#6cb33a" stroke-width="1.6"/>
<path d="M1028 107.5V125L1032 121.5L1035.5 128.5L1038 127.5L1034.7 120.5H1040Z" fill="#e9e9e9" stroke="#444" stroke-width="1"/>
</svg>

<!-- browser -->
<div class="a" style="left:4px;top:157px;width:244px;height:27px;background:#d5d5d5;border:1px solid #b9b9b9"></div>
<svg class="a" style="left:0;top:157px" width="260" height="27" viewBox="0 157 260 27">
 <path d="M10 170L15 166.8V173.2Z M15.5 170L20.5 166.8V173.2Z" fill="#333"/>
 <circle cx="230.2" cy="169.6" r="5.2" fill="#2b2b2b"/><rect x="227" y="168.8" width="6.4" height="1.7" fill="#fff"/>
 <rect x="243" y="164" width="0.8" height="12" fill="#888"/><rect x="245" y="164" width="0.8" height="12" fill="#888"/>
</svg>
<!-- angle box -->
<div class="a" style="left:893.3px;top:455px;width:102.8px;height:23.6px;background:#c6c6c6"></div>
<div class="a" style="left:904px;top:456.8px;width:77px;height:19.2px;background:#fff;border:1px solid #1e80e0"></div>
<div class="a" style="left:916.6px;top:458.4px;width:52.6px;height:16px;background:#3399ff"></div>
<div class="a" style="left:969px;top:458.4px;width:1px;height:16px;background:#111"></div>
<svg class="a" style="left:880px;top:454px" width="120" height="26" viewBox="880 454 120 26">
 <path d="M986.5 465.1h6.5l-3.25 4.3z" fill="#222"/>
 <path d="M884.5 456.5C886.5 457.5 886.5 459.5 884.5 460.5M884.5 461C886.5 462 886.5 464 884.5 465M884.5 465.5C886.5 466.5 886.5 468.5 884.5 469.5M884.5 470C886.5 471 886.5 473 884.5 474M884.5 474.5C886.5 475.5 886.5 477.5 884.5 478.5" fill="none" stroke="#dcdcdc" stroke-width="0.9"/>
</svg>
<div class="a" style="left:44px;top:190px;width:160px;height:20px;background:#8a8a8a"></div>
<div class="a" style="left:204px;top:190px;width:28px;height:20px;background:#c8c8c8"></div>
<div class="a" style="left:63px;top:215px;width:120px;height:21px;background:#cdcdcd"></div>
<div class="a" style="left:63px;top:242px;width:99px;height:21px;background:#cdcdcd"></div>
<div class="a" style="left:63px;top:268px;width:104px;height:21.5px;background:#cdcdcd"></div>
<div class="a" style="left:63px;top:294px;width:126px;height:21.5px;background:#cdcdcd"></div>
<svg class="a" style="left:0;top:185px" width="240" height="135" viewBox="0 185 240 135">
 <defs>
  <radialGradient id="bulbY" cx="0.4" cy="0.35" r="0.7"><stop offset="0" stop-color="#fffbd0"/><stop offset="0.5" stop-color="#f8e05a"/><stop offset="1" stop-color="#c9a418"/></radialGradient>
  <radialGradient id="bulbB" cx="0.4" cy="0.35" r="0.7"><stop offset="0" stop-color="#ffffff"/><stop offset="0.5" stop-color="#c9dcf7"/><stop offset="1" stop-color="#7f9fd0"/></radialGradient>
  <linearGradient id="fold" x1="0" y1="0" x2="0" y2="1"><stop offset="0" stop-color="#fafafa"/><stop offset="1" stop-color="#d7dade"/></linearGradient>
 </defs>
 <path d="M22.5 206.5L34.5 194V206.5Z" fill="#555" stroke="#333" stroke-width="0.8"/>
 <path d="M26 205L34 197V205Z" fill="#888"/>
 <!-- row1 bulb -->
 <circle cx="55.5" cy="197.5" r="5.2" fill="url(#bulbY)" stroke="#9b7d10" stroke-width="0.5"/>
 <rect x="53" y="202.5" width="5" height="4.5" fill="#8a8a8a" stroke="#555" stroke-width="0.5"/>
 <!-- row1 cube -->
 <path d="M75.5 195.5L79.5 192H91.5L87.5 195.5Z" fill="#fafafa" stroke="#555" stroke-width="0.7"/>
 <path d="M87.5 195.5L91.5 192V204L87.5 207.5Z" fill="#bdbdbd" stroke="#555" stroke-width="0.7"/>
 <rect x="75.5" y="195.5" width="12" height="12" fill="#ececec" stroke="#555" stroke-width="0.7"/>
 <circle cx="218" cy="199.5" r="5" fill="#f4f4f4" stroke="#444" stroke-width="1"/>
 <!-- row2 -->
 <path d="M44 220L54 226.6L44 233.2Z" fill="none" stroke="#333" stroke-width="1.2"/>
 <path d="M67 221.5H73L74.5 223.5H82.5V233.5H67Z" fill="url(#fold)" stroke="#333" stroke-width="1"/>
 <path d="M67 224.5H82.5" stroke="#333" stroke-width="0.7"/>
 <!-- row3 doc -->
 <path d="M67.5 244.5H77.5L82.5 249.5V258H67.5Z" fill="url(#fold)" stroke="#333" stroke-width="1"/>
 <path d="M77.5 244.5V249.5H82.5" fill="none" stroke="#333" stroke-width="0.7"/>
 <rect x="67" y="257.5" width="16" height="3.8" fill="#f2b630" stroke="#8a5a10" stroke-width="0.7"/>
 <!-- row4 -->
 <path d="M45 272.3L54 278.6L45 284.9Z" fill="none" stroke="#333" stroke-width="1.2"/>
 <circle cx="75" cy="275.5" r="5" fill="url(#bulbB)" stroke="#6680b0" stroke-width="0.6"/>
 <rect x="72.7" y="280.5" width="4.6" height="4.5" fill="#8a8a8a" stroke="#555" stroke-width="0.5"/>
 <path d="M94.5 274H100.5L102 276H110V286H94.5Z" fill="url(#fold)" stroke="#333" stroke-width="1"/>
 <path d="M94.5 277H110" stroke="#333" stroke-width="0.7"/>
 <!-- row5 -->
 <path d="M45 298.3L54 304.6L45 310.9Z" fill="none" stroke="#333" stroke-width="1.2"/>
 <circle cx="75" cy="301.5" r="5" fill="url(#bulbY)" stroke="#9b7d10" stroke-width="0.6"/>
 <rect x="72.7" y="306.5" width="4.6" height="4.5" fill="#8a8a8a" stroke="#555" stroke-width="0.5"/>
 <path d="M94.5 300H100.5L102 302H110V312H94.5Z" fill="url(#fold)" stroke="#333" stroke-width="1"/>
 <path d="M94.5 303H110" stroke="#333" stroke-width="0.7"/>
 <path d="M90 313.5L186.5 311" stroke="#4f7fbf" stroke-width="2" stroke-dasharray="3 3"/>
</svg>

<div class="a" style="left:198px;top:197px;width:318px;height:259px;background:#e2e2e2;border:1px solid #b5b5b5"></div>
<div class="a" style="left:199px;top:198px;width:316px;height:25.5px;background:#d5d5d5;border-bottom:1px solid #b8b8b8"></div>
<div class="a" style="left:199px;top:417px;width:316px;height:38px;background:#d3d3d3;border-top:1px solid #b3b3b3"></div>
<div class="a" style="left:278.5px;top:226px;width:84px;height:24.3px;background:#cbcbcb"></div>
<div class="a" style="left:278.5px;top:254.8px;width:84px;height:24.5px;background:#5a8ab8"></div>
<div class="a" style="left:278.5px;top:282.8px;width:223px;height:24.5px;background:#cdcdcd"></div>
<div class="a" style="left:281.2px;top:314px;width:206.8px;height:18.5px;background:#fff;border:1px solid #979797"></div>
<div class="a" style="left:278.5px;top:339.9px;width:223px;height:24.3px;background:#cdcdcd"></div>
<div class="a" style="left:278.5px;top:368.7px;width:223px;height:24.3px;background:#cdcdcd"></div>
<div class="a" style="left:356.7px;top:427.2px;width:65.2px;height:19.5px;background:#e8e8e8;border:1px solid #b8b8b8"></div>
<div class="a" style="left:433px;top:427.2px;width:65.5px;height:19.5px;background:#e8e8e8;border:1px solid #b8b8b8"></div>
<svg class="a" style="left:195px;top:195px" width="320" height="262" viewBox="195 195 320 262">
 <circle cx="209.8" cy="210.4" r="5.2" fill="#2a2a2a"/><rect x="206.6" y="209.6" width="6.4" height="1.7" fill="#fff"/>
 <!-- cursors -->
 <path d="M284.5 230.5V244.5L288 241.3L290.8 246.8L292.6 246L290 240.5H294.5Z" fill="#f4f4f4" stroke="#555" stroke-width="0.9"/>
 <path d="M284.5 259.3V273.3L288 270.1L290.8 275.6L292.6 274.8L290 269.3H294.5Z" fill="#f4f4f4" stroke="#333" stroke-width="0.9"/>
 <path d="M374.2 234.4L383.2 242.6M383.2 234.4L374.2 242.6M374.2 263.2L383.2 271.4M383.2 263.2L374.2 271.4" stroke="#444" stroke-width="1.8"/>
 <!-- type icon -->
 <path d="M280.5 292L288 300.5L295.5 292" fill="none" stroke="#333" stroke-width="1.1"/>
 <path d="M281 292C284 289.5 291 289 294 291.5" fill="none" stroke="#333" stroke-width="1.1"/>
 <path d="M292.5 289L295 291.8L291.6 292.6" fill="none" stroke="#333" stroke-width="1"/>
 <!-- dropdown arrows -->
 <g fill="#222">
  <path d="M489.8 293.3h6.4l-3.2 3.8z"/><path d="M490 321.5h6.6l-3.3 3.9z"/>
  <path d="M489.8 350.3h6.4l-3.2 3.8z"/><path d="M489.8 379.1h6.4l-3.2 3.8z"/>
 </g>
 <!-- direction icon -->
 <path d="M282 344L294 350.5L296 361L284.5 354.5Z" fill="#f08a40" stroke="#222" stroke-width="1"/>
 <path d="M281 360.5L290 352.5M281 360.5L281.5 356M281 360.5L285.5 360" fill="none" stroke="#111" stroke-width="1.5"/>
 <!-- operation icon -->
 <path d="M281 376V386.5C281 388.6 295.5 388.6 295.5 386.5V376" fill="#e4e7ea" stroke="#333" stroke-width="0.9"/>
 <ellipse cx="288.25" cy="376" rx="7.25" ry="2.3" fill="#fafafa" stroke="#333" stroke-width="0.9"/>
 <path d="M293 372.5L294 374.5L296.3 374.8L294.6 376.3L295 378.5L293 377.4L291 378.5L291.4 376.3L289.7 374.8L292 374.5Z" fill="#ff8a10"/>
 <!-- info -->
 <circle cx="219.8" cy="437.6" r="6.6" fill="#111"/><rect x="218.8" y="436" width="2.2" height="5.2" fill="#fff"/><circle cx="219.9" cy="433.9" r="1.2" fill="#fff"/>
</svg>

<div class="t" style="left:25.60px;top:5.50px;font-size:13.33px;color:#6a6a6a;transform:scaleX(0.947);">Autodesk Fusion 360</div>
<div class="t" style="left:40.22px;top:64.96px;font-size:13.62px;font-weight:bold;color:#4a4a4a;transform:scaleX(0.940);">Sculpteo --&gt; v0</div>
<div class="t" style="left:39.08px;top:113.82px;font-size:13.19px;font-weight:bold;color:#ffffff;transform:scaleX(0.888);">MODEL</div>
<div class="t" style="left:184.76px;top:136.71px;font-size:12.62px;color:#555;transform:scaleX(0.857);">SKETCH</div>
<div class="t" style="left:332.45px;top:136.71px;font-size:12.62px;color:#555;transform:scaleX(0.864);">CREATE</div>
<div class="t" style="left:422.30px;top:136.71px;font-size:12.62px;color:#555;transform:scaleX(0.891);">MODIFY</div>
<div class="t" style="left:500.70px;top:136.71px;font-size:12.62px;color:#555;transform:scaleX(0.890);">ASSEMBLE</div>
<div class="t" style="left:599.05px;top:136.71px;font-size:12.62px;color:#555;transform:scaleX(0.865);">CONSTRUCT</div>
<div class="t" style="left:701.25px;top:136.71px;font-size:12.62px;color:#555;transform:scaleX(0.839);">INSPECT</div>
<div class="t" style="left:782.13px;top:136.71px;font-size:12.62px;color:#555;transform:scaleX(0.853);">INSERT</div>
<div class="t" style="left:852.70px;top:136.71px;font-size:12.62px;color:#555;transform:scaleX(0.892);">MAKE</div>
<div class="t" style="left:918.00px;top:136.71px;font-size:12.62px;color:#555;transform:scaleX(0.872);">ADD-INS</div>
<div class="t" style="left:997.86px;top:136.71px;font-size:12.62px;color:#555;transform:scaleX(0.850);">SELECT</div>
<div class="t" style="left:33.29px;top:163.15px;font-size:12.34px;color:#6a6a6a;transform:scaleX(0.917);">BROWSER</div>
<div class="t" style="left:108.03px;top:193.82px;font-size:13.19px;font-weight:bold;color:#ffffff;transform:scaleX(0.930);">Sculpteo --&gt; v0</div>
<div class="t" style="left:98.84px;top:219.97px;font-size:12.20px;color:#555;transform:scaleX(0.987);">Named Views</div>
<div class="t" style="left:99.38px;top:246.47px;font-size:12.20px;color:#555;transform:scaleX(0.943);">Units: mm</div>
<div class="t" style="left:126.82px;top:272.47px;font-size:12.20px;color:#555;transform:scaleX(0.946);">Origin</div>
<div class="t" style="left:126.80px;top:298.47px;font-size:12.20px;color:#555;transform:scaleX(0.983);">Sketches</div>
<div class="t" style="left:226.57px;top:204.03px;font-size:11.77px;color:#6a6a6a;transform:scaleX(0.985);">REVOLVE</div>
<div class="t" style="left:209.33px;top:231.79px;font-size:12.77px;color:#444;transform:scaleX(0.949);">Profile</div>
<div class="t" style="left:210.30px;top:260.59px;font-size:12.77px;color:#444;transform:scaleX(0.988);">Axis</div>
<div class="t" style="left:210.07px;top:288.49px;font-size:12.77px;color:#444;transform:scaleX(0.915);">Type</div>
<div class="t" style="left:210.30px;top:316.79px;font-size:12.77px;color:#444;transform:scaleX(0.959);">Angle</div>
<div class="t" style="left:209.35px;top:345.59px;font-size:12.77px;color:#444;transform:scaleX(0.934);">Direction</div>
<div class="t" style="left:209.71px;top:374.69px;font-size:12.77px;color:#444;transform:scaleX(0.925);">Operation</div>
<div class="t" style="left:299.63px;top:231.79px;font-size:12.77px;color:#333;transform:scaleX(0.951);">1 selected</div>
<div class="t" style="left:299.63px;top:260.59px;font-size:12.77px;color:#ffffff;transform:scaleX(0.951);">1 selected</div>
<div class="t" style="left:302.00px;top:288.49px;font-size:12.77px;color:#333;transform:scaleX(0.959);">Angle</div>
<div class="t" style="left:285.32px;top:316.79px;font-size:12.77px;color:#222;transform:scaleX(0.944);">360.0 deg</div>
<div class="t" style="left:301.42px;top:345.59px;font-size:12.77px;color:#333;transform:scaleX(0.915);">One Side</div>
<div class="t" style="left:301.01px;top:374.69px;font-size:12.77px;color:#333;transform:scaleX(0.966);">New Body</div>
<div class="t" style="left:378.72px;top:430.54px;font-size:13.05px;color:#555;transform:scaleX(1.040);">OK</div>
<div class="t" style="left:443.29px;top:430.54px;font-size:13.05px;color:#555;transform:scaleX(1.089);">Cancel</div>
<div class="t" style="left:916.73px;top:459.33px;font-size:12.48px;color:#ffffff;transform:scaleX(0.951);">360.0 deg</div>
</body></html>
